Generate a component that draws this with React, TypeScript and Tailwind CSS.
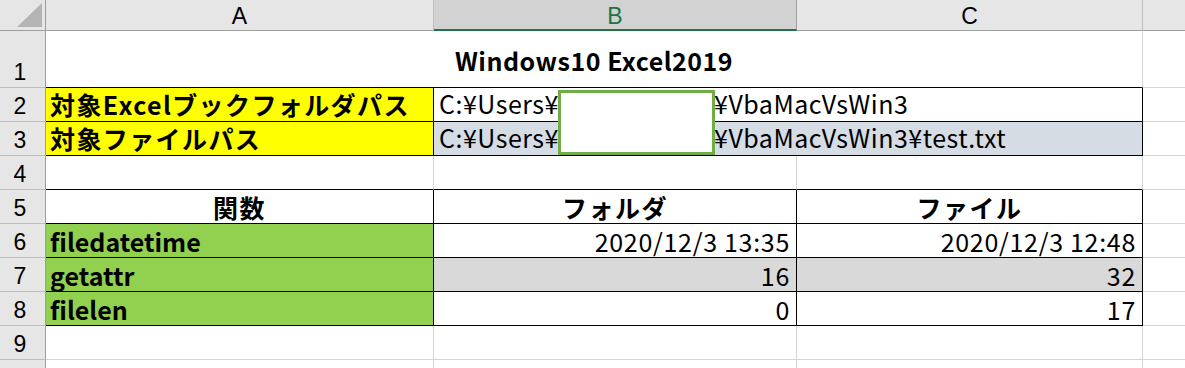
import React from "react";

const JP = "font-['Noto_Sans_CJK_JP',sans-serif]";

// column widths include the 1px gridline on the right
const W = { rh: "w-[46px]", a: "w-[388px]", b: "w-[363px]", c: "w-[346px]" };

function RowHead({ n }: { n: number | string }) {
  return (
    <div
      className={`${W.rh} shrink-0 flex items-end justify-center pr-[5px] pb-[3px] bg-[#e6e6e6] border-r border-b border-r-[#9e9e9e] border-b-[#bdbdbd] font-['Liberation_Sans',sans-serif] text-[23px] leading-none text-black`}
    >
      {n}
    </div>
  );
}

function Rest({ bottom = "border-b-[#d4d4d4]" }: { bottom?: string }) {
  return <div className={`flex-1 border-b ${bottom}`} />;
}

export default function App() {
  const gridR = "border-r-[#d4d4d4]";
  const gridB = "border-b-[#d4d4d4]";
  const cell = `shrink-0 flex whitespace-nowrap border-r border-b ${JP} text-[25px] leading-none text-black`;
  const bot = "items-end";

  return (
    <div className="relative w-[1185px] h-[368px] overflow-hidden bg-white">
      {/* column headers */}
      <div className="flex h-[31px]">
        <div className={`${W.rh} shrink-0 relative bg-[#e6e6e6] border-r border-b border-r-[#9e9e9e] border-b-[#9e9e9e]`}>
          <svg className="absolute left-0 top-0" width="45" height="30">
            <polygon points="17,27 42,27 42,3" fill="#b4b4b4" />
          </svg>
        </div>
        <div className={`${W.a} shrink-0 flex items-center justify-center bg-[#e6e6e6] border-r border-b border-r-[#bdbdbd] border-b-[#9e9e9e] font-['Liberation_Sans',sans-serif] text-[23px] pt-[2px]`}>
          A
        </div>
        <div className={`${W.b} shrink-0 flex items-center justify-center bg-[#d2d2d2] border-r border-b-2 border-r-[#9e9e9e] border-b-[#217346] text-[#217346] font-['Liberation_Sans',sans-serif] text-[23px] pt-[3px]`}>
          B
        </div>
        <div className={`${W.c} shrink-0 flex items-center justify-center bg-[#e6e6e6] border-r border-b border-r-[#bdbdbd] border-b-[#9e9e9e] font-['Liberation_Sans',sans-serif] text-[23px] pt-[2px]`}>
          C
        </div>
        <div className="flex-1 bg-[#e6e6e6] border-b border-b-[#9e9e9e]" />
      </div>

      {/* 1: title, centred across A:C */}
      <div className="flex h-[57px]">
        <RowHead n={1} />
        <div className={`${cell} w-[1097px] ${gridR} border-b-black items-center justify-center font-bold tracking-[0.5px] pt-[2px]`}>
          Windows10 Excel2019
        </div>
        <Rest />
      </div>

      {/* 2-3: target paths */}
      <div className="flex h-[34px]">
        <RowHead n={2} />
        <div className={`${cell} ${bot} ${W.a} bg-[#ffff00] border-r-black border-b-black font-bold pl-[4px] pb-[4px] tracking-[1.4px]`}>
          対象Excelブックフォルダパス
        </div>
        <div className={`${cell} ${bot} w-[709px] border-r-black border-b-black pl-[5px] pb-[5px] tracking-[0.5px]`}>
          <span className="inline-block w-[275px]">C:¥Users¥</span>
          <span>¥VbaMacVsWin3</span>
        </div>
        <Rest />
      </div>
      <div className="flex h-[34px]">
        <RowHead n={3} />
        <div className={`${cell} ${bot} ${W.a} bg-[#ffff00] border-r-black border-b-black font-bold pl-[4px] pb-[4px] tracking-[1.4px]`}>
          対象ファイルパス
        </div>
        <div className={`${cell} ${bot} w-[709px] bg-[#d6dce4] border-r-black border-b-black pl-[5px] pb-[5px] tracking-[0.5px]`}>
          <span className="inline-block w-[275px]">C:¥Users¥</span>
          <span>¥VbaMacVsWin3¥test.txt</span>
        </div>
        <Rest />
      </div>

      {/* 4: empty */}
      <div className="flex h-[34px]">
        <RowHead n={4} />
        <div className={`${cell} ${W.a} ${gridR} border-b-black`} />
        <div className={`${cell} ${W.b} ${gridR} border-b-black`} />
        <div className={`${cell} ${W.c} ${gridR} border-b-black`} />
        <Rest />
      </div>

      {/* 5-8: results table */}
      <div className="flex h-[34px]">
        <RowHead n={5} />
        <div className={`${cell} ${bot} ${W.a} border-r-black border-b-black justify-center font-bold pb-[3px] tracking-[1.5px]`}>関数</div>
        <div className={`${cell} ${bot} ${W.b} border-r-black border-b-black justify-center font-bold pb-[3px] tracking-[1.5px]`}>フォルダ</div>
        <div className={`${cell} ${bot} ${W.c} border-r-black border-b-black justify-center font-bold pb-[3px] tracking-[1.5px]`}>ファイル</div>
        <Rest />
      </div>
      {[
        { name: "filedatetime", folder: "2020/12/3 13:35", file: "2020/12/3 12:48", bg: "bg-white" },
        { name: "getattr", folder: "16", file: "32", bg: "bg-[#d9d9d9]" },
        { name: "filelen", folder: "0", file: "17", bg: "bg-white" },
      ].map((r, i) => (
        <div key={r.name} className="flex h-[34px]">
          <RowHead n={6 + i} />
          <div className={`${cell} ${bot} ${W.a} bg-[#92d050] border-r-black border-b-black font-bold pl-[4px] pb-[3px]`}>
            {r.name}
          </div>
          <div className={`${cell} ${bot} ${W.b} ${r.bg} border-r-black border-b-black justify-end pr-[6px] pb-[3px] tracking-[0.7px]`}>
            {r.folder}
          </div>
          <div className={`${cell} ${bot} ${W.c} ${r.bg} border-r-black border-b-black justify-end pr-[6px] pb-[3px] tracking-[0.7px]`}>
            {r.file}
          </div>
          <Rest />
        </div>
      ))}

      {/* 9-10 */}
      <div className="flex h-[34px]">
        <RowHead n={9} />
        <div className={`${cell} ${W.a} ${gridR} ${gridB}`} />
        <div className={`${cell} ${W.b} ${gridR} ${gridB}`} />
        <div className={`${cell} ${W.c} ${gridR} ${gridB}`} />
        <Rest />
      </div>
      <div className="flex h-[20px]">
        <RowHead n="" />
        <div className={`${cell} ${W.a} ${gridR} ${gridB}`} />
        <div className={`${cell} ${W.b} ${gridR} ${gridB}`} />
        <div className={`${cell} ${W.c} ${gridR} ${gridB}`} />
        <Rest />
      </div>

      {/* box covering the user name */}
      <div className="absolute left-[558px] top-[90px] w-[157px] h-[65px] bg-white border-[3px] border-[#70ad47]" />
    </div>
  );
}
